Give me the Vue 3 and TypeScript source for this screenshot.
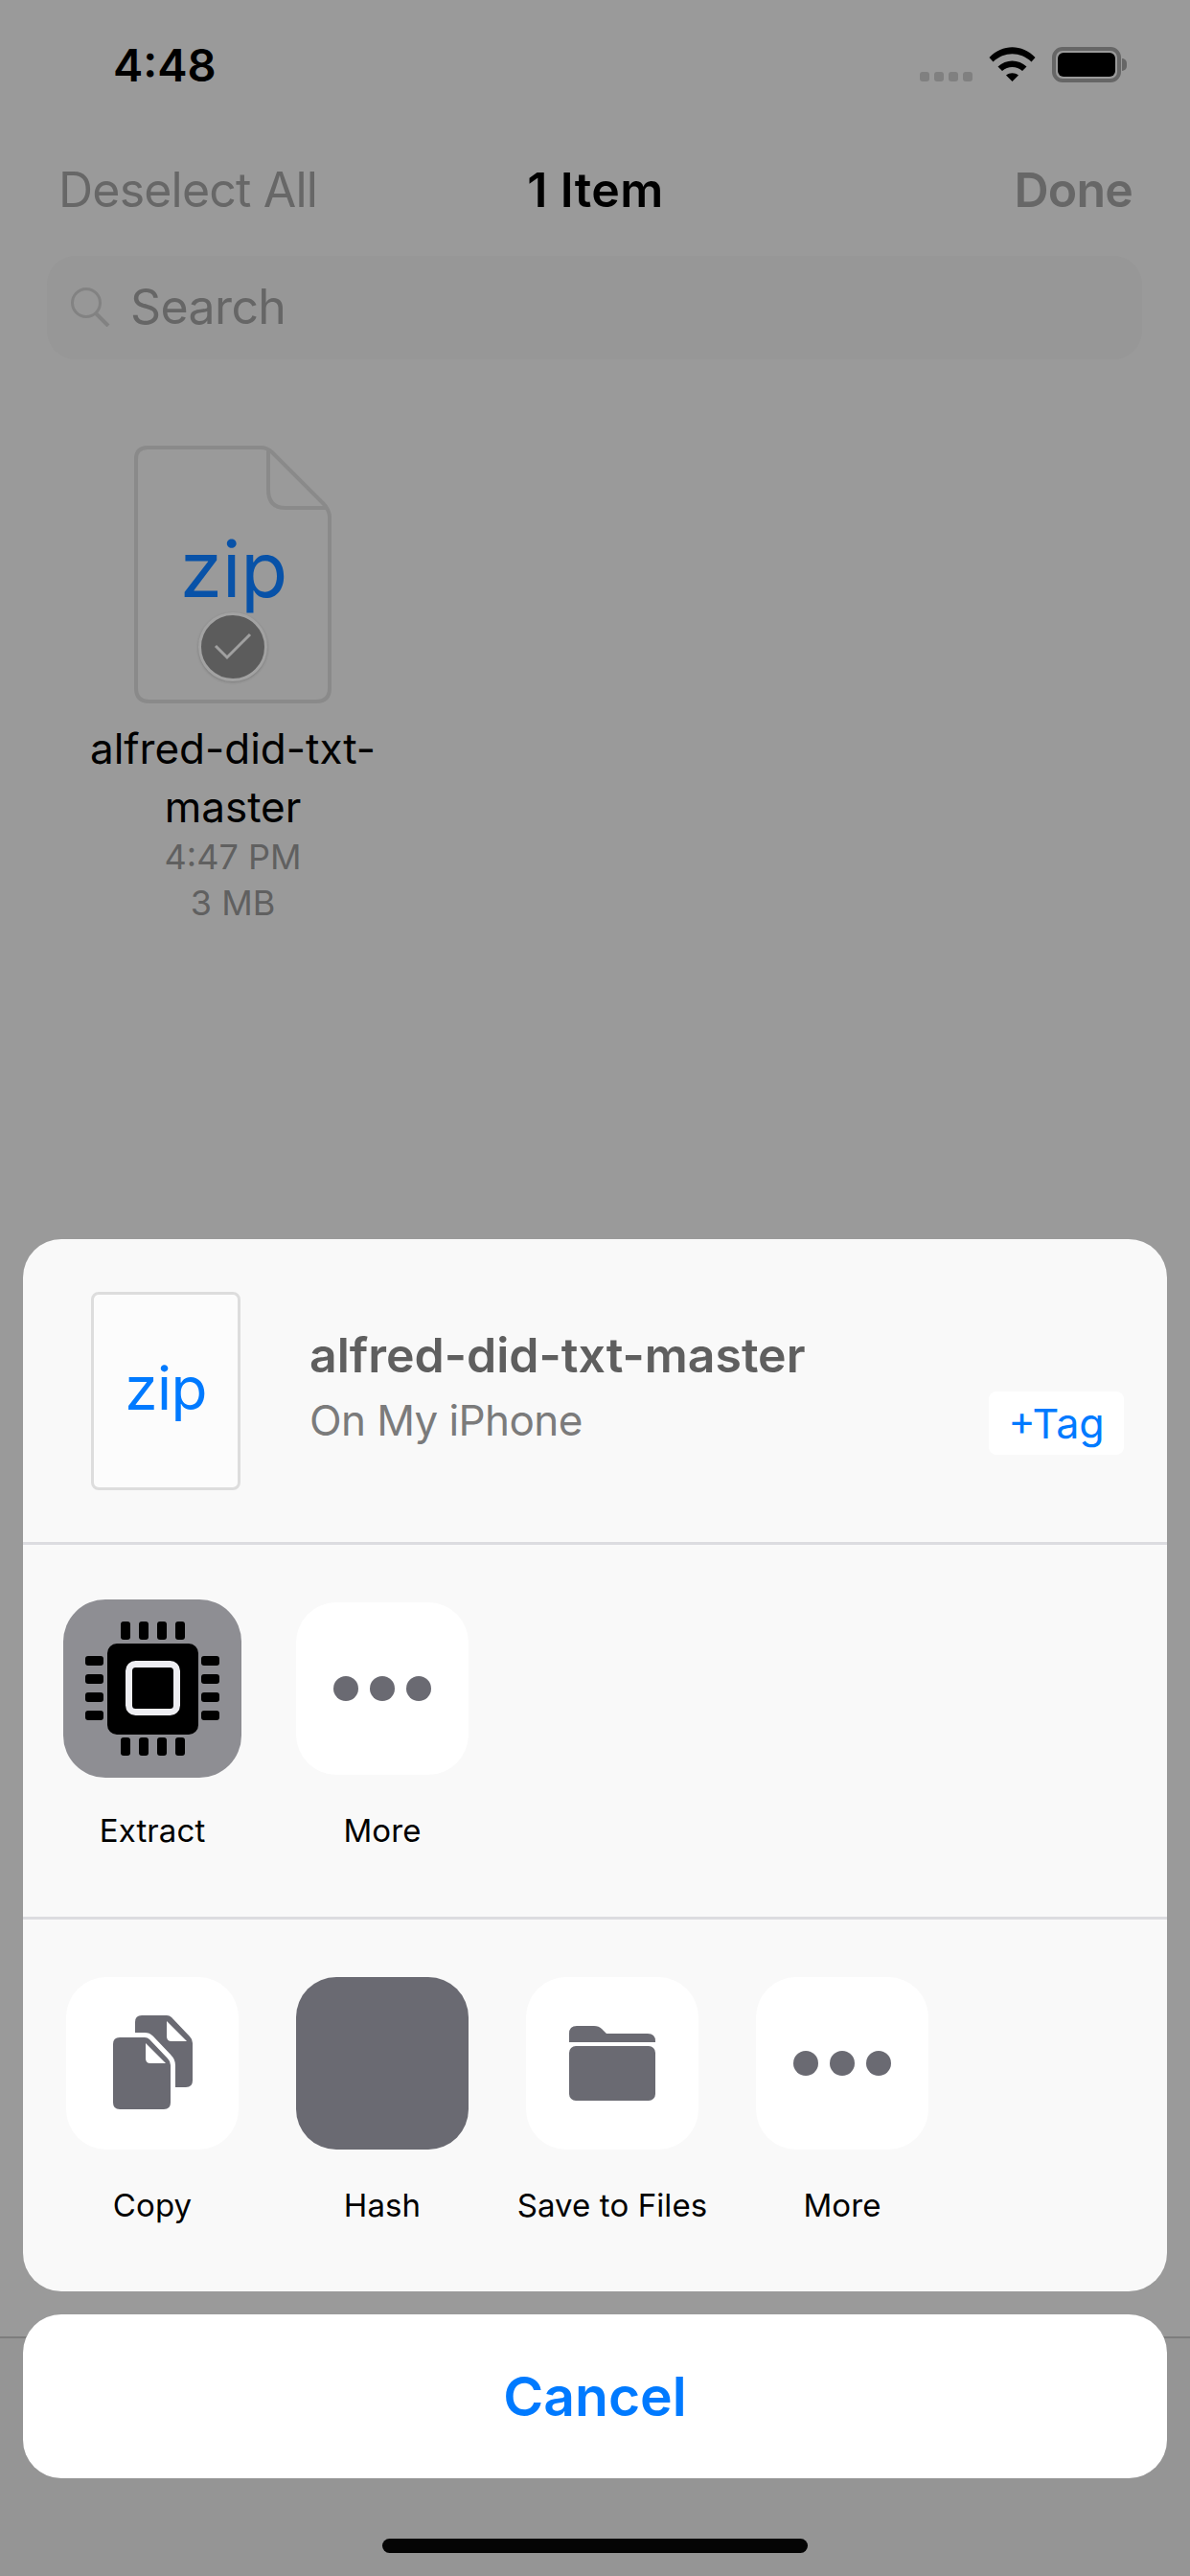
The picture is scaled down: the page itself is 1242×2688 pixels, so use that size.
<script setup lang="ts">
const firstRow = [
  { id: 'extract', label: 'Extract' },
  { id: 'more', label: 'More' },
]
const secondRow = [
  { id: 'copy', label: 'Copy' },
  { id: 'hash', label: 'Hash' },
  { id: 'files', label: 'Save to Files' },
  { id: 'more', label: 'More' },
]
// chip pins, measured from the top-left of the 186px tile
const pinSteps = [60, 79, 98, 117]
</script>

<template>
  <div class="page">
    <div class="status">
      <span class="time">4:48</span>
      <div class="status-icons">
        <div class="signal"><i></i><i></i><i></i><i></i></div>
        <svg class="wifi" width="49" height="36" viewBox="0 0 49 36">
          <path d="M0.5 11C14-3.5 35-3.5 48.5 11L44.5 15.5C33 4.5 16 4.5 4.5 15.5Z" />
          <path d="M9.5 20.5C18 12.5 31 12.5 39.5 20.5L35 25C29 19.5 20 19.5 14 25Z" />
          <path d="M18 29.5C22 26.5 27 26.5 31 29.5L24.5 36Z" />
        </svg>
        <div class="battery"><div class="battery-fill"></div></div>
      </div>
    </div>

    <div class="nav">
      <span class="nav-left">Deselect All</span>
      <span class="nav-title">1 Item</span>
      <span class="nav-right">Done</span>
    </div>

    <div class="search">
      <svg width="42" height="42" viewBox="0 0 42 42" fill="none" stroke="#828282">
        <circle cx="17" cy="17" r="14.5" stroke-width="3" />
        <path d="M27 28L40 41" stroke-width="4" />
      </svg>
      <span>Search</span>
    </div>

    <div class="file">
      <div class="file-icon">
        <svg width="206" height="269" viewBox="0 0 206 269" fill="none" stroke="#8a8a8a" stroke-width="4">
          <path d="M14 2H132Q139 2 144 7L197 60Q204 67 204 75V253Q204 267 190 267H16Q2 267 2 253V14Q2 2 14 2Z" />
          <path d="M140 4V46Q140 65 158 65H200" />
        </svg>
        <span class="file-ext">zip</span>
        <div class="file-check">
          <svg width="40" height="32" viewBox="0 0 40 32" fill="none" stroke="#a0a0a0" stroke-width="3">
            <path d="M2 15L14 27L38 3" />
          </svg>
        </div>
      </div>
      <div class="file-name">alfred-did-txt-<br />master</div>
      <div class="file-meta">4:47 PM</div>
      <div class="file-meta">3 MB</div>
    </div>

    <div class="toolbar"></div>

    <div class="sheet-wrap">
      <div class="sheet">
        <div class="sheet-head">
          <div class="thumb"><span>zip</span></div>
          <div class="head-text">
            <div class="head-title">alfred-did-txt-master</div>
            <div class="head-sub">On My iPhone</div>
          </div>
          <div class="tag">+Tag</div>
        </div>

        <div class="actions first">
          <div v-for="item in firstRow" :key="item.id" class="action">
            <div v-if="item.id === 'extract'" class="tile extract">
              <svg width="186" height="186" viewBox="0 0 186 186">
                <rect x="46" y="46" width="95" height="95" rx="10" fill="#000" />
                <rect x="68.5" y="67.5" width="50" height="50" rx="7" fill="none" stroke="#eeeef2" stroke-width="7" />
                <template v-for="p in pinSteps" :key="p">
                  <rect :x="p" y="23" width="10" height="19" rx="3" fill="#000" />
                  <rect :x="p" y="144" width="10" height="19" rx="3" fill="#000" />
                  <rect x="23" :y="p - 1" width="19" height="10" rx="3" fill="#000" />
                  <rect x="144" :y="p - 1" width="19" height="10" rx="3" fill="#000" />
                </template>
              </svg>
            </div>
            <div v-else class="tile">
              <svg width="180" height="180" viewBox="0 0 180 180" fill="#6a6a72">
                <circle cx="52" cy="90" r="13" /><circle cx="90" cy="90" r="13" /><circle cx="128" cy="90" r="13" />
              </svg>
            </div>
            <div class="action-label">{{ item.label }}</div>
          </div>
        </div>

        <div class="actions second">
          <div v-for="item in secondRow" :key="item.id" class="action">
            <div class="tile" :class="{ hash: item.id === 'hash' }">
              <svg v-if="item.id === 'copy'" width="180" height="180" viewBox="0 0 180 180" fill="#6a6a72">
                <path d="M79 40H105Q108 40 110 42L129 62Q132 65 132 69V108Q132 115 125 115H80Q72 115 72 108V47Q72 40 79 40Z" />
                <path d="M105 46L126 67H110Q105 67 105 62Z" fill="#fff" />
                <path d="M56 63H82Q85 63 87 65L106 85Q109 88 109 92V131Q109 138 102 138H56Q49 138 49 131V70Q49 63 56 63Z" stroke="#fff" stroke-width="10" paint-order="stroke" />
                <path d="M83 69L104 90H88Q83 90 83 85Z" fill="#fff" />
              </svg>
              <svg v-else-if="item.id === 'files'" width="180" height="180" viewBox="0 0 180 180" fill="#6a6a72">
                <path d="M45 68V59Q45 51 53 51H71Q76 51 79 54L84 59H127Q135 59 135 67V68Z" />
                <rect x="45" y="72" width="90" height="57" rx="7" />
              </svg>
              <svg v-else-if="item.id === 'more'" width="180" height="180" viewBox="0 0 180 180" fill="#6a6a72">
                <circle cx="52" cy="90" r="13" /><circle cx="90" cy="90" r="13" /><circle cx="128" cy="90" r="13" />
              </svg>
            </div>
            <div class="action-label">{{ item.label }}</div>
          </div>
        </div>
      </div>

      <div class="cancel">Cancel</div>
    </div>

    <div class="home-bar"></div>
  </div>
</template>

<style scoped>
.page {
  position: relative;
  width: 1242px;
  height: 2688px;
  overflow: hidden;
  display: flex;
  flex-direction: column;
  background: #9a9a9a;
  font-family: Inter, "Liberation Sans", sans-serif;
  color: #000;
}

.status {
  height: 148px;
  flex: none;
  display: flex;
  justify-content: space-between;
  padding: 49px 72px 0 118px;
  box-sizing: border-box;
}
.time {
  font-size: 47px;
  font-weight: 600;
  line-height: 40px;
  height: 40px;
  margin-top: -1px;
}
.status-icons {
  display: flex;
  align-items: flex-start;
}
.signal {
  display: flex;
  gap: 5px;
  margin-top: 26px;
}
.signal i {
  width: 10px;
  height: 10px;
  border-radius: 3px;
  background: #808080;
}
.wifi {
  margin-left: 17px;
  fill: #000;
}
.battery {
  position: relative;
  width: 72px;
  height: 37px;
  margin-left: 17px;
  box-sizing: border-box;
  border: 4px solid #666;
  border-radius: 11px;
  padding: 2px;
}
.battery::after {
  content: "";
  position: absolute;
  right: -10px;
  top: 8px;
  width: 5px;
  height: 13px;
  border-radius: 0 6px 6px 0;
  background: #666;
}
.battery-fill {
  width: 100%;
  height: 100%;
  border-radius: 6px;
  background: #000;
}

.nav {
  height: 100px;
  flex: none;
  display: grid;
  grid-template-columns: 1fr auto 1fr;
  align-items: center;
  padding: 0 60px 0 61px;
  font-size: 50px;
  line-height: 100px;
  letter-spacing: -0.8px;
}
.nav-left {
  color: #676767;
}
.nav-title {
  font-weight: 600;
  letter-spacing: 0.4px;
}
.nav-right {
  justify-self: end;
  font-weight: 600;
  color: #676767;
}

.search {
  flex: none;
  height: 108px;
  margin: 19px 50px 0 49px;
  padding: 0 0 2px 24px;
  box-sizing: border-box;
  display: flex;
  align-items: center;
  gap: 21px;
  border-radius: 30px;
  background: #979797;
  color: #666;
  font-size: 50px;
  letter-spacing: -0.6px;
}

.file {
  flex: none;
  width: 300px;
  margin: 90px 0 0 93px;
  display: flex;
  flex-direction: column;
  align-items: center;
  text-align: center;
}
.file-icon {
  position: relative;
  width: 206px;
  height: 269px;
}
.file-icon svg {
  display: block;
}
.file-ext {
  position: absolute;
  left: 2px;
  right: 0;
  top: 84px;
  font-size: 80px;
  line-height: 90px;
  color: #0852a8;
  letter-spacing: 0;
}
.file-check {
  position: absolute;
  left: 67px;
  top: 174px;
  width: 72px;
  height: 72px;
  box-sizing: border-box;
  border: 3px solid #a2a2a2;
  border-radius: 50%;
  background: #5c5c5c;
  display: flex;
  align-items: center;
  justify-content: center;
  box-shadow: 0 1px 3px rgba(0, 0, 0, 0.2);
}
.file-name {
  margin-top: 17px;
  font-size: 44px;
  line-height: 61px;
}
.file-meta {
  font-size: 36px;
  line-height: 48px;
  color: #606060;
}
.file-name + .file-meta {
  margin-top: -3px;
}

.toolbar {
  flex: none;
  margin-top: auto;
  height: 250px;
  box-sizing: border-box;
  border-top: 2px solid #7d7d7d;
  background: #959595;
}

.sheet-wrap {
  position: absolute;
  left: 24px;
  right: 24px;
  top: 1293px;
}
.sheet {
  height: 1098px;
  box-sizing: border-box;
  border-radius: 40px;
  background: #f9f9f9;
  overflow: hidden;
}
.sheet-head {
  display: flex;
  height: 319px;
  box-sizing: border-box;
  padding: 55px 45px 0 71px;
  border-bottom: 3px solid #dcdce0;
}
.thumb {
  flex: none;
  width: 156px;
  height: 207px;
  box-sizing: border-box;
  border: 3px solid #dddddd;
  border-radius: 8px;
  padding-bottom: 6px;
  background: #fcfcfc;
  display: flex;
  align-items: center;
  justify-content: center;
  font-size: 62px;
  color: #007aff;
  letter-spacing: -0.5px;
}
.head-text {
  margin: 36px 0 0 72px;
}
.head-title {
  font-size: 50px;
  line-height: 60px;
  font-weight: 600;
  color: #5f5f5f;
}
.head-sub {
  margin-top: 8px;
  font-size: 44px;
  line-height: 60px;
  letter-spacing: -0.6px;
  color: #7b7b7b;
}
.tag {
  margin: 104px 0 0 auto;
  width: 141px;
  height: 66px;
  display: flex;
  align-items: center;
  justify-content: center;
  border-radius: 8px;
  background: #fff;
  color: #007aff;
  font-size: 43px;
}

.actions {
  display: flex;
  padding: 60px 0 67px 15px;
  box-sizing: border-box;
}
.first {
  height: 391px;
  border-bottom: 3px solid #dcdce0;
}
.second {
  padding-top: 60px;
}
.action {
  width: 240px;
  display: flex;
  flex-direction: column;
  align-items: center;
}
.tile {
  width: 180px;
  height: 180px;
  border-radius: 42px;
  background: #fff;
}
.tile svg {
  display: block;
}
.tile.extract {
  width: 186px;
  height: 186px;
  margin: -3px 0;
  border-radius: 44px;
  background: #8e8e93;
}
.tile.hash {
  background: #6a6a72;
}
.action-label {
  margin-top: 38px;
  font-size: 33px;
  line-height: 40px;
  letter-spacing: 0.1px;
  white-space: nowrap;
}

.cancel {
  margin-top: 24px;
  height: 171px;
  display: flex;
  align-items: center;
  justify-content: center;
  border-radius: 40px;
  background: #fff;
  color: #007aff;
  font-size: 57px;
  font-weight: 600;
}

.home-bar {
  position: absolute;
  left: 399px;
  bottom: 24px;
  width: 444px;
  height: 15px;
  border-radius: 8px;
  background: #050505;
}
</style>
